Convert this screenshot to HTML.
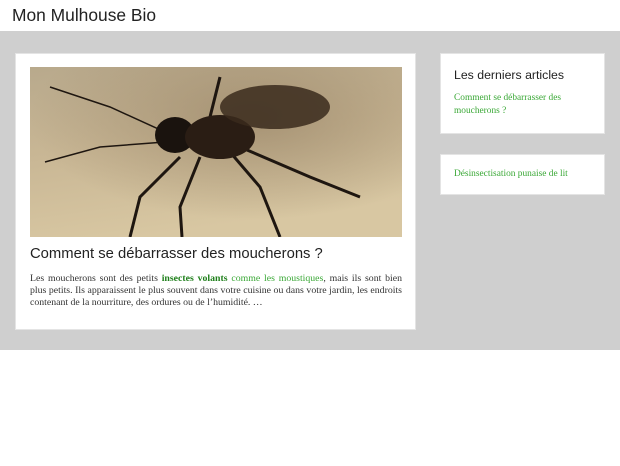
<!DOCTYPE html>
<html><head><meta charset="utf-8"><style>
*{margin:0;padding:0;box-sizing:border-box}
body{width:620px;height:466px;background:#fff;font-family:"Liberation Serif",serif;position:relative;overflow:hidden}
.hdr{position:absolute;left:12px;top:5px;font-family:"Liberation Sans",sans-serif;font-size:17.4px;color:#222}
.band{position:absolute;left:0;top:31px;width:620px;height:319px;background:#cfcfcf}
.card{position:absolute;background:#fff;border:1px solid #e4e4e4}
h2{position:absolute;left:30px;top:246px;font-family:"Liberation Sans",sans-serif;font-weight:normal;font-size:14.8px;color:#222}
p{position:absolute;left:30px;top:273px;width:372px;font-size:9.8px;line-height:12px;color:#333;text-align:justify}
a{color:#3aa836;text-decoration:none}
b{color:#1e7f1a}
.sh{position:absolute;left:454px;top:68px;font-family:"Liberation Sans",sans-serif;font-size:12.3px;color:#222}
.sl{position:absolute;left:454px;font-size:9.4px;line-height:12.5px;color:#3aa836}
</style></head><body>
<div class="hdr">Mon Mulhouse Bio</div>
<div class="band"></div>
<div class="card" style="left:15px;top:53px;width:401px;height:277px"></div>
<svg style="position:absolute;left:30px;top:67px" width="372" height="170" viewBox="0 0 372 170">
<defs><linearGradient id="g" x1="0" y1="0" x2="0.3" y2="1"><stop offset="0" stop-color="#b8a98c"/><stop offset="0.5" stop-color="#c9b795"/><stop offset="1" stop-color="#d8c7a2"/></linearGradient>
<radialGradient id="r" cx="0.6" cy="0.3" r="0.6"><stop offset="0" stop-color="#9e8a6c" stop-opacity=".8"/><stop offset="1" stop-color="#9e8a6c" stop-opacity="0"/></radialGradient></defs>
<rect width="372" height="170" fill="url(#g)"/>
<rect width="372" height="170" fill="url(#r)"/>
<g stroke="#1e1610" fill="none" stroke-width="3">
<path d="M150 90 L110 130 L100 170"/><path d="M170 90 L150 140 L152 170"/><path d="M200 85 L230 120 L250 170"/><path d="M210 80 L280 110 L330 130"/>
<path d="M135 65 L80 40 L20 20" stroke-width="1.5"/><path d="M135 75 L70 80 L15 95" stroke-width="1.5"/>
<path d="M180 50 L190 10"/>
</g>
<ellipse cx="145" cy="68" rx="20" ry="18" fill="#1a130e"/>
<ellipse cx="190" cy="70" rx="35" ry="22" fill="#2a1d14"/>
<ellipse cx="245" cy="40" rx="55" ry="22" fill="#3a2a1c" opacity=".85"/>
</svg>
<h2>Comment se débarrasser des moucherons ?</h2>
<p>Les moucherons sont des petits <b>insectes volants</b> <a>comme les moustiques</a>, mais ils sont bien plus petits. Ils apparaissent le plus souvent dans votre cuisine ou dans votre jardin, les endroits contenant de la nourriture, des ordures ou de l’humidité. …</p>
<div class="card" style="left:440px;top:53px;width:165px;height:81px"></div>
<div class="sh">Les derniers articles</div>
<div class="sl" style="top:92px">Comment se débarrasser des<br>moucherons ?</div>
<div class="card" style="left:440px;top:154px;width:165px;height:41px"></div>
<div class="sl" style="top:168px">Désinsectisation punaise de lit</div>
</body></html>
